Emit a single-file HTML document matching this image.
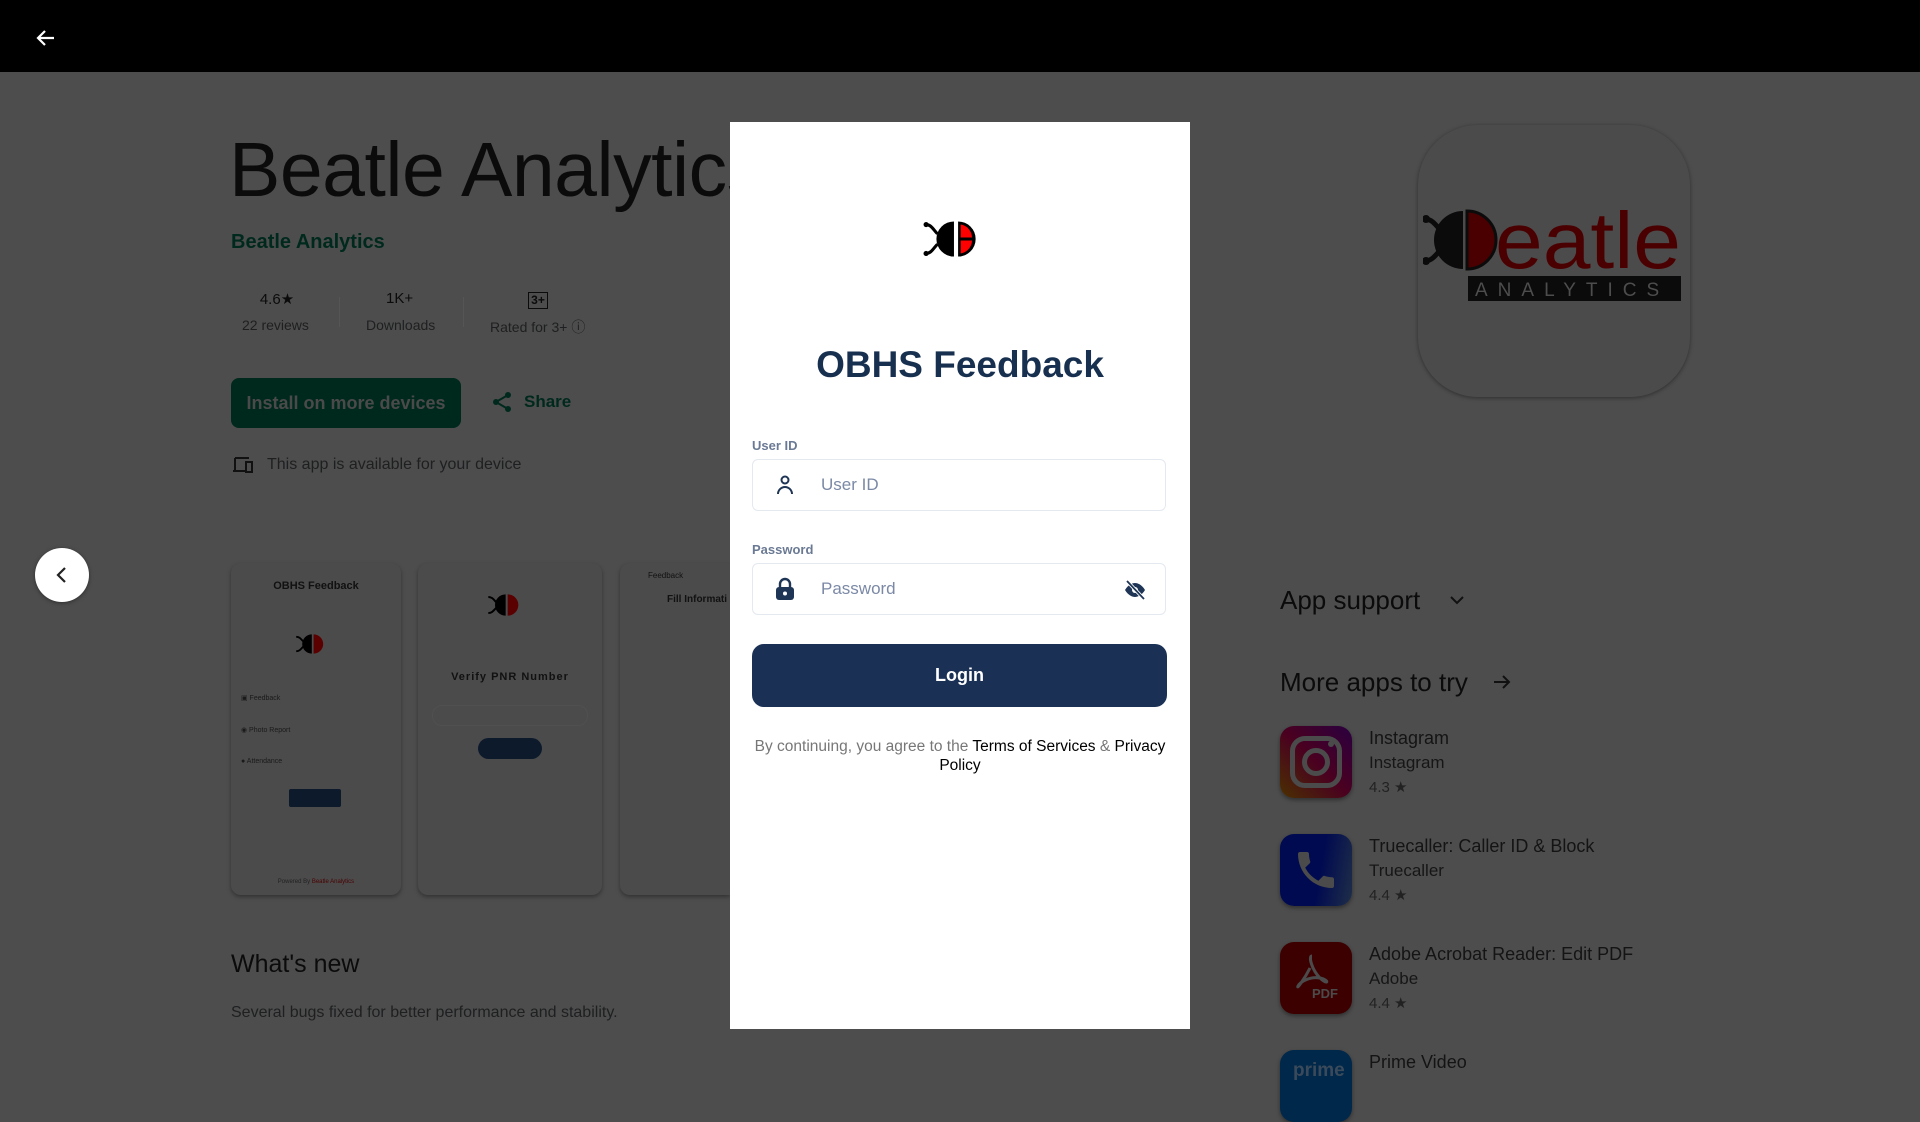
<!DOCTYPE html>
<html><head><meta charset="utf-8">
<style>
*{margin:0;padding:0;box-sizing:border-box}
body{width:1920px;height:1080px;overflow:hidden;background:#4d4d4d;font-family:"Liberation Sans",Roboto,sans-serif;position:relative}
.abs{position:absolute}
.top{left:0;top:0;width:1920px;height:72px;background:#000}
.dk{color:#0b0b0c}
.gr{color:#1e1f20}
.card{background:#4b4b4b;border-radius:10px;box-shadow:0 2px 4px rgba(0,0,0,.35)}
.modal{left:730px;top:122px;width:460px;height:907px;background:#fff}
.lbl{font-size:13px;font-weight:bold;color:#6b7a94}
.inp{left:22px;width:414px;height:52px;border:1.5px solid #e4e8ef;border-radius:6px}
.ph{left:68px;top:15px;font-size:17px;color:#7b89a6}
.app .ic{width:72px;height:72px;border-radius:14px;box-shadow:0 2px 4px rgba(0,0,0,.4)}
.app .t{left:89px;top:2px;font-size:18px;color:#141415;white-space:nowrap}
.app .s{left:89px;top:27px;font-size:17px;color:#161617;white-space:nowrap}
.app .r{left:89px;top:52px;font-size:15px;color:#222;white-space:nowrap}
</style></head><body>
<div class="abs top"></div>
<svg class="abs" style="left:34px;top:26px" width="24" height="24" viewBox="0 0 24 24"><path d="M20 12H5M11 5l-7 7 7 7" stroke="#fff" stroke-width="2.2" fill="none"/></svg>

<div class="abs dk" style="left:229px;top:126px;font-size:77px;letter-spacing:-0.5px;white-space:nowrap">Beatle Analytics</div>
<div class="abs" style="left:231px;top:231px;font-size:20px;color:#00291d;font-weight:bold">Beatle Analytics</div>

<div class="abs dk" style="left:252px;top:290px;font-size:15px;width:50px;text-align:center;white-space:nowrap">4.6★</div>
<div class="abs gr" style="left:242px;top:317px;font-size:14px">22 reviews</div>
<div class="abs" style="left:339px;top:297px;width:1px;height:30px;background:#555"></div>
<div class="abs dk" style="left:386px;top:290px;font-size:15px">1K+</div>
<div class="abs gr" style="left:366px;top:317px;font-size:14px">Downloads</div>
<div class="abs" style="left:463px;top:297px;width:1px;height:30px;background:#555"></div>
<div class="abs dk" style="left:528px;top:292px;width:20px;height:17px;border:1.5px solid #0b0b0c;font-size:12px;font-weight:bold;text-align:center;line-height:14px">3+</div>
<div class="abs gr" style="left:490px;top:317px;font-size:14px;white-space:nowrap">Rated for 3+ ⓘ</div>

<div class="abs" style="left:231px;top:378px;width:230px;height:50px;border-radius:8px;background:#00291d;color:#4a4a4a;font-size:18px;font-weight:bold;text-align:center;line-height:50px">Install on more devices</div>
<svg class="abs" style="left:490px;top:390px" width="24" height="24" viewBox="0 0 24 24"><circle cx="18" cy="5" r="3" fill="#00291d"/><circle cx="6" cy="12" r="3" fill="#00291d"/><circle cx="18" cy="19" r="3" fill="#00291d"/><path d="M6 12L18 5M6 12l12 7" stroke="#00291d" stroke-width="2"/></svg>
<div class="abs" style="left:524px;top:392px;font-size:17px;font-weight:bold;color:#00291d">Share</div>
<svg class="abs" style="left:232px;top:455px" width="22" height="20" viewBox="0 0 22 20"><path d="M3 3h14M3 3v12M1 16h12" stroke="#111" stroke-width="2" fill="none"/><rect x="14" y="7" width="6" height="10" stroke="#111" stroke-width="2" fill="none"/></svg>
<div class="abs gr" style="left:267px;top:456px;font-size:16px">This app is available for your device</div>

<div class="abs" style="left:35px;top:548px;width:54px;height:54px;border-radius:50%;background:#fff;box-shadow:0 1px 4px rgba(0,0,0,.4)"></div>
<svg class="abs" style="left:50px;top:563px" width="24" height="24" viewBox="0 0 24 24"><path d="M15 5l-7 7 7 7" stroke="#222" stroke-width="2.2" fill="none"/></svg>

<div class="abs card" style="left:231px;top:563px;width:170px;height:332px">
 <div class="abs" style="left:0;top:17px;width:170px;text-align:center;font-size:11px;font-weight:bold;color:#111">OBHS Feedback</div>
 <svg class="abs" style="left:64px;top:70px" width="36" height="22" viewBox="0 0 60 36"><path d="M2 6c6 0 8 4 12 8M2 30c6 0 8-4 12-8" stroke="#000" stroke-width="3" fill="none"/><path d="M28 2a16 16 0 0 0 0 32z" fill="#000"/><path d="M31 2a16 16 0 0 1 0 32z" fill="#5a0000"/></svg>
 <div class="abs" style="left:10px;top:131px;font-size:7px;color:#1a1a1a">▣ Feedback</div>
 <div class="abs" style="left:10px;top:163px;font-size:7px;color:#1a1a1a">◉ Photo Report</div>
 <div class="abs" style="left:10px;top:195px;font-size:7px;color:#1a1a1a">● Attendance</div>
 <div class="abs" style="left:58px;top:226px;width:52px;height:18px;background:#0d1a2c;border-radius:2px"></div>
 <div class="abs" style="left:0;top:316px;width:170px;text-align:center;font-size:6px;color:#222">Powered By <span style="color:#4a0000">Beatle Analytics</span></div>
</div>
<div class="abs card" style="left:418px;top:563px;width:184px;height:332px">
 <svg class="abs" style="left:68px;top:30px" width="42" height="24" viewBox="0 0 60 36"><path d="M2 6c6 0 8 4 12 8M2 30c6 0 8-4 12-8" stroke="#000" stroke-width="3" fill="none"/><path d="M28 2a16 16 0 0 0 0 32z" fill="#000"/><path d="M31 2a16 16 0 0 1 0 32z" fill="#5a0000"/></svg>
 <div class="abs" style="left:0;top:108px;width:184px;text-align:center;font-size:11px;font-weight:bold;color:#111;letter-spacing:1px">Verify PNR Number</div>
 <div class="abs" style="left:14px;top:142px;width:156px;height:21px;border-radius:10px;border:1px solid #505050"></div>
 <div class="abs" style="left:60px;top:175px;width:64px;height:21px;background:#0d1a2c;border-radius:11px"></div>
</div>
<div class="abs card" style="left:620px;top:563px;width:110px;height:332px;border-radius:10px 0 0 10px">
 <div class="abs" style="left:28px;top:8px;font-size:8px;color:#111">Feedback</div>
 <div class="abs" style="left:47px;top:31px;font-size:10px;font-weight:bold;color:#111;white-space:nowrap">Fill Informati</div>
</div>

<div class="abs dk" style="left:231px;top:950px;font-size:25px">What's new</div>
<div class="abs gr" style="left:231px;top:1004px;font-size:16px">Several bugs fixed for better performance and stability.</div>

<div class="abs" style="left:1418px;top:125px;width:272px;height:272px;border-radius:60px;background:#4b4b4b;box-shadow:0 1px 4px rgba(0,0,0,.4)">
 <svg class="abs" style="left:5px;top:80px" width="265" height="100" viewBox="0 0 265 100"><path d="M2 14c8 0 12 8 18 14M2 56c8 0 12-8 18-14" stroke="#0b0b0b" stroke-width="5" fill="none"/><circle cx="3" cy="14" r="4" fill="#0b0b0b"/><circle cx="3" cy="56" r="4" fill="#0b0b0b"/><path d="M40 6a29 29 0 0 0 0 58z" fill="#0b0b0b"/><path d="M44 6a29 29 0 0 1 0 58z" fill="#4a0000" stroke="#0b0b0b" stroke-width="3"/><text x="72" y="63" font-family="Liberation Sans" font-size="80" fill="#4a0000" textLength="186" lengthAdjust="spacingAndGlyphs">eatle</text><rect x="45" y="71" width="213" height="25" fill="#0b0b0b"/><text x="52" y="91" font-family="Liberation Sans" font-size="19" letter-spacing="10" fill="#4d4d4d">ANALYTICS</text></svg>
</div>

<div class="abs dk" style="left:1280px;top:585px;font-size:26px">App support</div>
<svg class="abs" style="left:1447px;top:590px" width="20" height="20" viewBox="0 0 20 20"><path d="M4 7l6 6 6-6" stroke="#111" stroke-width="2" fill="none"/></svg>
<div class="abs dk" style="left:1280px;top:667px;font-size:26px">More apps to try</div>
<svg class="abs" style="left:1491px;top:671px" width="22" height="22" viewBox="0 0 22 22"><path d="M3 11h15M12 5l6 6-6 6" stroke="#111" stroke-width="2" fill="none"/></svg>

<div class="abs app" style="left:1280px;top:726px">
 <div class="abs ic" style="background:linear-gradient(45deg,#4a3000,#4a0020 50%,#2a0040)"><div class="abs" style="left:10px;top:10px;width:52px;height:52px;border:5px solid #4b4b4b;border-radius:15px"></div><div class="abs" style="left:22px;top:22px;width:28px;height:28px;border:5px solid #4b4b4b;border-radius:50%"></div><div class="abs" style="left:48px;top:15px;width:6px;height:6px;background:#4b4b4b;border-radius:50%"></div></div>
 <div class="abs t">Instagram</div><div class="abs s">Instagram</div><div class="abs r">4.3 ★</div>
</div>
<div class="abs app" style="left:1280px;top:834px">
 <div class="abs ic" style="background:linear-gradient(100deg,#000a50 55%,#1e2e48)"><svg class="abs" style="left:12px;top:12px" width="48" height="48" viewBox="0 0 24 24"><path d="M6.6 10.8c1.4 2.8 3.8 5.1 6.6 6.6l2.2-2.2c.3-.3.7-.4 1-.2 1.1.4 2.3.6 3.6.6.6 0 1 .4 1 1V20c0 .6-.4 1-1 1C10.6 21 3 13.4 3 4c0-.6.4-1 1-1h3.5c.6 0 1 .4 1 1 0 1.3.2 2.5.6 3.6.1.3 0 .7-.2 1z" fill="#4b4b4b"/></svg></div>
 <div class="abs t">Truecaller: Caller ID &amp; Block</div><div class="abs s">Truecaller</div><div class="abs r">4.4 ★</div>
</div>
<div class="abs app" style="left:1280px;top:942px">
 <div class="abs ic" style="background:#3d0000"><div class="abs" style="left:32px;top:44px;font-size:13px;font-weight:bold;color:#4b4b4b">PDF</div><svg class="abs" style="left:12px;top:10px" width="40" height="40" viewBox="0 0 40 40"><path d="M20 4c-4 0 0 14 8 22s10 2 0 0-20 4-22 8 6-6 12-18" stroke="#4b4b4b" stroke-width="3" fill="none"/></svg></div>
 <div class="abs t">Adobe Acrobat Reader: Edit PDF</div><div class="abs s">Adobe</div><div class="abs r">4.4 ★</div>
</div>
<div class="abs app" style="left:1280px;top:1050px">
 <div class="abs ic" style="background:#00284a"><div class="abs" style="left:13px;top:10px;font-size:19px;font-weight:bold;color:#3a4a5a">prime</div></div>
 <div class="abs t">Prime Video</div>
</div>

<div class="abs modal">
 <svg class="abs" style="left:193px;top:98px" width="64" height="38" viewBox="0 0 62 36"><path d="M3 4c5 0 7 5 11 9M3 32c5 0 7-5 11-9" stroke="#000" stroke-width="3" fill="none"/><circle cx="3" cy="4" r="2.5"/><circle cx="3" cy="32" r="2.5"/><path d="M30 1a17 17 0 0 0 0 34z" fill="#000"/><path d="M34 1v34a17 17 0 0 0 0-34z" fill="#000"/><path d="M36.5 4v12.5h11A13 13 0 0 0 36.5 4zM36.5 19.5V32a13 13 0 0 0 11-12.5z" fill="#f00"/></svg>
 <div class="abs" style="left:0;top:222px;width:460px;text-align:center;font-size:37px;font-weight:bold;color:#18304f">OBHS Feedback</div>
 <div class="abs lbl" style="left:22px;top:316px">User ID</div>
 <div class="abs inp" style="top:337px">
  <svg class="abs" style="left:22px;top:14px" width="20" height="22" viewBox="0 0 20 22"><circle cx="10" cy="6" r="3.5" stroke="#1e3556" stroke-width="2" fill="none"/><path d="M3 20a7 7 0 0 1 14 0" stroke="#1e3556" stroke-width="2" fill="none"/></svg>
  <div class="abs ph">User ID</div>
 </div>
 <div class="abs lbl" style="left:22px;top:420px">Password</div>
 <div class="abs inp" style="top:441px">
  <svg class="abs" style="left:22px;top:13px" width="20" height="24" viewBox="0 0 20 24"><path d="M5 10V7a5 5 0 0 1 10 0v3" stroke="#1e3556" stroke-width="2.4" fill="none"/><rect x="1" y="10" width="18" height="13" rx="3" fill="#1e3556"/><circle cx="10" cy="16.5" r="2" fill="#fff"/></svg>
  <div class="abs ph">Password</div>
  <svg class="abs" style="left:370px;top:14px" width="24" height="24" viewBox="0 0 24 24"><path d="M2 12c3-5 7-7 10-7s7 2 10 7c-3 5-7 7-10 7s-7-2-10-7z" fill="#1e3556"/><circle cx="12" cy="12" r="3" fill="#fff"/><path d="M4 3l17 18" stroke="#fff" stroke-width="3.5"/><path d="M4 3l17 18" stroke="#1e3556" stroke-width="1.8"/></svg>
 </div>
 <div class="abs" style="left:22px;top:522px;width:415px;height:63px;border-radius:12px;background:#1a3155;color:#fff;font-size:18px;font-weight:bold;text-align:center;line-height:63px">Login</div>
 <div class="abs" style="left:0;top:615px;width:460px;text-align:center;font-size:15.5px;line-height:19px;color:#777">By continuing, you agree to the <b style="color:#000;font-weight:normal">Terms of Services</b> &amp; <b style="color:#000;font-weight:normal">Privacy<br>Policy</b></div>
</div>
</body></html>
